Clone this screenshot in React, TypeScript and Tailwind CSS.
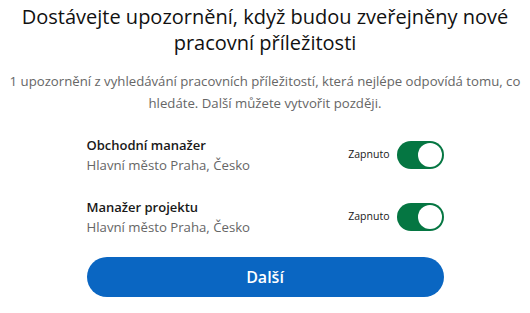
import { useState } from "react";

const alerts = [
  { title: "Obchodní manažer", place: "Hlavní město Praha, Česko" },
  { title: "Manažer projektu", place: "Hlavní město Praha, Česko" },
];

function Toggle({ on, onClick }: { on: boolean; onClick: () => void }) {
  return (
    <button
      onClick={onClick}
      className={`flex h-[28px] w-[47px] items-center rounded-full p-[2px] ${on ? "justify-end bg-[#057642]" : "justify-start bg-[#8c8c8c]"}`}
    >
      <span className="block h-[24px] w-[24px] rounded-full bg-white" />
    </button>
  );
}

export default function App() {
  const [state, setState] = useState([true, true]);

  return (
    <div className="w-[530px] h-[313px] bg-white font-['Open_Sans',sans-serif] text-center">
      <h1 className="pt-[4px] text-[20px] leading-[26px] font-medium text-[#111111]">
        Dostávejte upozornění, když budou zveřejněny nové pracovní příležitosti
      </h1>
      <p className="mt-[14px] px-1 text-[13.2px] leading-[22px] text-[#666666]">
        1 upozornění z vyhledávání pracovních příležitostí, která nejlépe odpovídá tomu, co hledáte. Další můžete vytvořit později.
      </p>
      <div className="mx-auto mt-[21px] w-[357px] text-left">
        <div className="flex flex-col gap-[22px]">
          {alerts.map((a, i) => (
            <div key={i} className="flex items-center justify-between">
              <div>
                <div className="text-[13px] leading-[20px] font-semibold text-[#191919]">{a.title}</div>
                <div className="text-[13.2px] leading-[20px] text-[#666666]">{a.place}</div>
              </div>
              <div className="flex items-center gap-[7px]">
                <span className="text-[10.5px] text-[#191919]">{state[i] ? "Zapnuto" : "Vypnuto"}</span>
                <Toggle on={state[i]} onClick={() => setState(s => s.map((v, j) => (j === i ? !v : v)))} />
              </div>
            </div>
          ))}
        </div>
        <button className="mt-[20px] h-[40px] w-full rounded-full bg-[#0a66c2] text-[16px] font-semibold text-white">
          Další
        </button>
      </div>
    </div>
  );
}
